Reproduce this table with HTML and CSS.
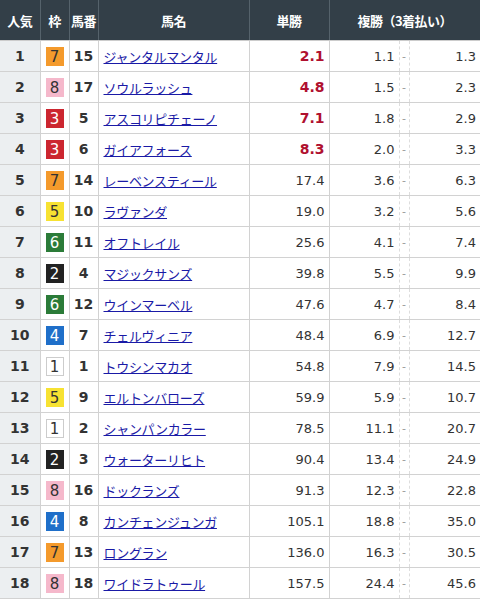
FILE: index.html
```html
<!DOCTYPE html>
<html lang="ja">
<head>
<meta charset="utf-8">
<link rel="stylesheet" href="styles.css">
</head>
<body>
<table class="odds">
<colgroup>
<col class="c-pop"><col class="c-waku"><col class="c-ban"><col class="c-name"><col class="c-win"><col class="c-lo"><col class="c-dash"><col class="c-hi">
</colgroup>
<thead>
<tr><th>人気</th><th>枠</th><th>馬番</th><th>馬名</th><th>単勝</th><th colspan="3">複勝（3着払い）</th></tr>
</thead>
<tbody>
<tr><td class="pop">1</td><td class="waku"><span class="w w7">7</span></td><td class="ban">15</td><td class="name"><a href="#">ジャンタルマンタル</a></td><td class="win hot">2.1</td><td class="lo">1.1</td><td class="dash">-</td><td class="hi">1.3</td></tr>
<tr><td class="pop">2</td><td class="waku"><span class="w w8">8</span></td><td class="ban">17</td><td class="name"><a href="#">ソウルラッシュ</a></td><td class="win hot">4.8</td><td class="lo">1.5</td><td class="dash">-</td><td class="hi">2.3</td></tr>
<tr><td class="pop">3</td><td class="waku"><span class="w w3">3</span></td><td class="ban">5</td><td class="name"><a href="#">アスコリピチェーノ</a></td><td class="win hot">7.1</td><td class="lo">1.8</td><td class="dash">-</td><td class="hi">2.9</td></tr>
<tr><td class="pop">4</td><td class="waku"><span class="w w3">3</span></td><td class="ban">6</td><td class="name"><a href="#">ガイアフォース</a></td><td class="win hot">8.3</td><td class="lo">2.0</td><td class="dash">-</td><td class="hi">3.3</td></tr>
<tr><td class="pop">5</td><td class="waku"><span class="w w7">7</span></td><td class="ban">14</td><td class="name"><a href="#">レーベンスティール</a></td><td class="win">17.4</td><td class="lo">3.6</td><td class="dash">-</td><td class="hi">6.3</td></tr>
<tr><td class="pop">6</td><td class="waku"><span class="w w5">5</span></td><td class="ban">10</td><td class="name"><a href="#">ラヴァンダ</a></td><td class="win">19.0</td><td class="lo">3.2</td><td class="dash">-</td><td class="hi">5.6</td></tr>
<tr><td class="pop">7</td><td class="waku"><span class="w w6">6</span></td><td class="ban">11</td><td class="name"><a href="#">オフトレイル</a></td><td class="win">25.6</td><td class="lo">4.1</td><td class="dash">-</td><td class="hi">7.4</td></tr>
<tr><td class="pop">8</td><td class="waku"><span class="w w2">2</span></td><td class="ban">4</td><td class="name"><a href="#">マジックサンズ</a></td><td class="win">39.8</td><td class="lo">5.5</td><td class="dash">-</td><td class="hi">9.9</td></tr>
<tr><td class="pop">9</td><td class="waku"><span class="w w6">6</span></td><td class="ban">12</td><td class="name"><a href="#">ウインマーベル</a></td><td class="win">47.6</td><td class="lo">4.7</td><td class="dash">-</td><td class="hi">8.4</td></tr>
<tr><td class="pop">10</td><td class="waku"><span class="w w4">4</span></td><td class="ban">7</td><td class="name"><a href="#">チェルヴィニア</a></td><td class="win">48.4</td><td class="lo">6.9</td><td class="dash">-</td><td class="hi">12.7</td></tr>
<tr><td class="pop">11</td><td class="waku"><span class="w w1">1</span></td><td class="ban">1</td><td class="name"><a href="#">トウシンマカオ</a></td><td class="win">54.8</td><td class="lo">7.9</td><td class="dash">-</td><td class="hi">14.5</td></tr>
<tr><td class="pop">12</td><td class="waku"><span class="w w5">5</span></td><td class="ban">9</td><td class="name"><a href="#">エルトンバローズ</a></td><td class="win">59.9</td><td class="lo">5.9</td><td class="dash">-</td><td class="hi">10.7</td></tr>
<tr><td class="pop">13</td><td class="waku"><span class="w w1">1</span></td><td class="ban">2</td><td class="name"><a href="#">シャンパンカラー</a></td><td class="win">78.5</td><td class="lo">11.1</td><td class="dash">-</td><td class="hi">20.7</td></tr>
<tr><td class="pop">14</td><td class="waku"><span class="w w2">2</span></td><td class="ban">3</td><td class="name"><a href="#">ウォーターリヒト</a></td><td class="win">90.4</td><td class="lo">13.4</td><td class="dash">-</td><td class="hi">24.9</td></tr>
<tr><td class="pop">15</td><td class="waku"><span class="w w8">8</span></td><td class="ban">16</td><td class="name"><a href="#">ドックランズ</a></td><td class="win">91.3</td><td class="lo">12.3</td><td class="dash">-</td><td class="hi">22.8</td></tr>
<tr><td class="pop">16</td><td class="waku"><span class="w w4">4</span></td><td class="ban">8</td><td class="name"><a href="#">カンチェンジュンガ</a></td><td class="win">105.1</td><td class="lo">18.8</td><td class="dash">-</td><td class="hi">35.0</td></tr>
<tr><td class="pop">17</td><td class="waku"><span class="w w7">7</span></td><td class="ban">13</td><td class="name"><a href="#">ロングラン</a></td><td class="win">136.0</td><td class="lo">16.3</td><td class="dash">-</td><td class="hi">30.5</td></tr>
<tr><td class="pop">18</td><td class="waku"><span class="w w8">8</span></td><td class="ban">18</td><td class="name"><a href="#">ワイドラトゥール</a></td><td class="win">157.5</td><td class="lo">24.4</td><td class="dash">-</td><td class="hi">45.6</td></tr>
</tbody>
</table>
</body>
</html>
```

FILE: styles.css
```css
html, body {
  margin: 0;
  padding: 0;
  background: #ffffff;
}
body {
  font-family: "DejaVu Sans", "Noto Sans CJK JP", sans-serif;
  color: #333333;
}
.odds {
  width: 480px;
  border-collapse: collapse;
  table-layout: fixed;
}
.c-pop { width: 40px; }
.c-waku { width: 29px; }
.c-ban { width: 29px; }
.c-name { width: 151px; }
.c-win { width: 80px; }
.c-lo { width: 70px; }
.c-dash { width: 10px; }
.c-hi { width: 71px; }

.odds th {
  height: 40px;
  padding: 0;
  background: #333f48;
  color: #ffffff;
  font-family: "Noto Sans CJK JP", sans-serif;
  font-size: 13px;
  font-weight: bold;
  text-align: center;
  border-left: 1px solid #55626b;
  border-bottom: 1px solid #cccccc;
  letter-spacing: -0.5px;
}
.odds th:first-child { border-left: none; }

.odds td {
  height: 30px;
  padding: 0;
  border: 1px solid #d2d2d2;
  font-size: 13px;
  vertical-align: middle;
  white-space: nowrap;
}
.odds td.pop {
  background: #eceff1;
  text-align: center;
  font-weight: bold;
  font-size: 14px;
  color: #333333;
  border-left: none;
}
.odds td.waku {
  text-align: center;
}
.w {
  display: inline-block;
  width: 18px;
  height: 19px;
  line-height: 20px;
  font-size: 15px;
  text-align: center;
  font-family: "DejaVu Sans", sans-serif;
  vertical-align: middle;
  box-sizing: border-box;
}
.w1 { background: #ffffff; border: 1px solid #cccccc; color: #333333; line-height: 18px; }
.w2 { background: #222222; color: #ffffff; }
.w3 { background: #cc2630; color: #ffffff; }
.w4 { background: #1f6fc9; color: #ffffff; }
.w5 { background: #f7e232; color: #333333; }
.w6 { background: #2b7b38; color: #ffffff; }
.w7 { background: #f49a2c; color: #333333; }
.w8 { background: #f5b8cb; color: #333333; }

.odds td.ban {
  text-align: center;
  font-weight: bold;
  font-size: 14px;
}
.odds td.name {
  padding-left: 5px;
  font-family: "Noto Sans CJK JP", sans-serif;
  font-size: 13px;
  letter-spacing: -0.3px;
}
.name a {
  color: #1a1aa6;
  text-decoration: underline;
}
.odds td.win {
  text-align: right;
  padding-right: 4px;
}
.odds td.win.hot {
  color: #b0102f;
  font-weight: bold;
  font-size: 14px;
}
.odds td.lo {
  text-align: right;
  padding-right: 4px;
  border-right: 1px dashed #dddddd;
}
.odds td.dash {
  text-align: center;
  color: #999999;
  font-size: 11px;
  border-left: 1px dashed #dddddd;
  border-right: 1px dashed #dddddd;
}
.odds td.hi {
  text-align: right;
  padding-right: 4px;
  border-left: 1px dashed #dddddd;
  border-right: none;
}
```
